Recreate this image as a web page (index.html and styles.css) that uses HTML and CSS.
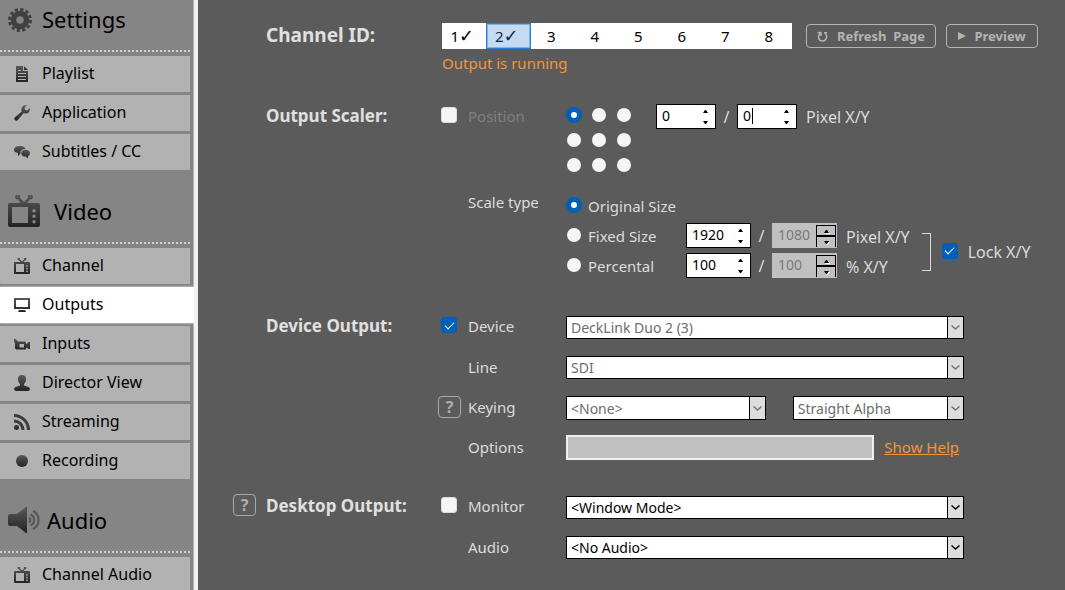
FILE: index.html
```
<!DOCTYPE html>
<html lang="en">
<head>
<meta charset="utf-8">
<title>Outputs</title>
<link rel="stylesheet" href="styles.css">
</head>
<body>
<svg class="defs" aria-hidden="true">
  <defs>
    <linearGradient id="ink" x1="0" y1="0" x2="0" y2="1"><stop offset="0" stop-color="#585858"/><stop offset="1" stop-color="#232323"/></linearGradient>
    <symbol id="tv" viewBox="0 0 32 32">
      <path fill="url(#ink)" fill-rule="evenodd" d="M2 8H12.500L10 4.500A2.600 2.600 0 1 1 12 3L16 7L20 3A2.600 2.600 0 1 1 22 4.500L19 8H30Q32 8 32 10V30Q32 32 30 32H2Q0 32 0 30V10Q0 8 2 8ZM4 12V28H20V12ZM26 14A1.700 1.700 0 1 0 26 17.400A1.700 1.700 0 1 0 26 14ZM26 19.500A1.700 1.700 0 1 0 26 22.900A1.700 1.700 0 1 0 26 19.500ZM26 25A1.700 1.700 0 1 0 26 28.400A1.700 1.700 0 1 0 26 25Z"/>
    </symbol>
    <symbol id="chev" viewBox="0 0 9 5"><path d="M.5.5L4.500 4L8.500.5" fill="none" stroke="currentColor" stroke-width="1.500"/></symbol>
    <symbol id="up" viewBox="0 0 5 3"><path d="M0 3L2 0H3L5 3Z" fill="currentColor"/></symbol>
    <symbol id="down" viewBox="0 0 5 3"><path d="M0 0L2 3H3L5 0Z" fill="currentColor"/></symbol>
  </defs>
</svg>
<div class="app">
  <nav class="side">
    <h2 class="group group-first"><svg class="gi gi-gear" viewBox="0 0 24 24"><circle cx="12" cy="12" r="6.500" fill="none" stroke="#404040" stroke-width="5.500"/><circle cx="12" cy="12" r="10.400" fill="none" stroke="#404040" stroke-width="3.200" stroke-dasharray="3.050 2.395"/></svg><span class="t-settings">Settings</span></h2>
    <ul class="items">
      <li><a class="item" href="#"><svg class="ic" viewBox="0 0 16 16"><path fill="url(#ink)" d="M2 0H9V5H14V16H2Z"/><path fill="url(#ink)" d="M10 0L14 4H10Z"/><path d="M4 4.500H7M4 7.500H12M4 10.500H12M4 13.500H12" stroke="#b2b2b2"/></svg><span>Playlist</span></a></li>
      <li><a class="item" href="#"><svg class="ic" viewBox="0 0 16 16"><path fill="url(#ink)" d="M13 .3L10.500 2.800L11 5L13.200 5.500L15.800 3C16.300 6 14.500 8.700 11.500 8.500L9.500 8.300L3.500 15.200C1.800 16.800-.8 14.400.8 12.500L7.700 6.500C6.500 3 9 -.6 13 .3Z"/></svg><span>Application</span></a></li>
      <li><a class="item" href="#"><svg class="ic" viewBox="0 0 16 16"><path fill="url(#ink)" d="M6 2C9 2 11 3.300 11.500 5C8 5 6 7 6.500 9.500L4 12V9C1.500 8.700 0 7.500 0 5.800C0 3.600 2.500 2 6 2Z"/><path fill="url(#ink)" d="M11.500 5.800C14 5.800 16 7.200 16 9.200C16 10.700 14.800 11.800 14 12V14.500L11.500 12.600C9 12.600 7.200 11.200 7.200 9.200C7.200 7.200 9 5.800 11.500 5.800Z"/></svg><span>Subtitles / CC</span></a></li>
    </ul>
    <h2 class="group"><svg class="gi gi-tv"><use href="#tv"/></svg><span class="t-video">Video</span></h2>
    <ul class="items">
      <li><a class="item" href="#"><svg class="ic"><use href="#tv"/></svg><span>Channel</span></a></li>
      <li><a class="item current" href="#" aria-current="page"><svg class="ic" viewBox="0 0 16 16"><path fill="url(#ink)" fill-rule="evenodd" d="M0 1H16V12H0ZM2 3V10H14V3ZM5 13H11L12 15H4Z"/></svg><span>Outputs</span></a></li>
      <li><a class="item" href="#"><svg class="ic" viewBox="0 0 16 16"><path fill="url(#ink)" fill-rule="evenodd" d="M0 3L1 2.500L4 5.500H11Q12 5.500 12 7.500L13 8L14.500 6H16V13H14.500L13 11.500L12 12V13.500H2.500L1 12.500V7L0 6ZM5.500 8V11.500H10V8Z"/></svg><span>Inputs</span></a></li>
      <li><a class="item" href="#"><svg class="ic" viewBox="0 0 16 16"><path fill="url(#ink)" d="M8 0C10.500 0 12 1.500 12 4C12 7 11 8 10 9V10.500L14.500 12Q16 12.800 16 14Q16 15.500 14 16H2Q0 15.500 0 14Q0 12.800 1.500 12L6 10.500V9C5 8 4 7 4 4C4 1.500 5.500 0 8 0Z"/></svg><span>Director View</span></a></li>
      <li><a class="item" href="#"><svg class="ic" viewBox="0 0 16 16"><g fill="none" stroke="#3c3c3c" stroke-width="3"><path d="M0 1.500A14.500 14.500 0 0 1 14.500 16M0 7A9 9 0 0 1 9 16"/></g><circle cx="2.500" cy="13.500" r="2.500" fill="#303030"/></svg><span>Streaming</span></a></li>
      <li><a class="item" href="#"><svg class="ic" viewBox="0 0 16 16"><circle cx="8" cy="8" r="6" fill="url(#ink)"/></svg><span>Recording</span></a></li>
    </ul>
    <h2 class="group"><svg class="gi gi-audio" viewBox="0 0 32 26"><path fill="url(#ink)" d="M2 7H9L18 0H19V26H18L9 19H2Q0 19 0 17V9Q0 7 2 7Z"/><g fill="none" stroke="#555" stroke-width="2"><path d="M21 10.500A3 3 0 0 1 21 15.500M22.500 7.500A6 6 0 0 1 22.500 18.500M25 4A10 10 0 0 1 25 22"/></g></svg><span class="t-audio">Audio</span></h2>
    <ul class="items">
      <li><a class="item" href="#"><svg class="ic"><use href="#tv"/></svg><span>Channel Audio</span></a></li>
    </ul>
  </nav>

  <main class="main">
    <section class="channels">
      <h3 class="title">Channel ID:</h3>
      <div class="picker">
        <div class="tabs" role="group" aria-label="Channel ID">
          <button class="tab">1<span class="tick">✓</span></button><button class="tab on" aria-pressed="true">2<span class="tick">✓</span></button><button class="tab">3</button><button class="tab">4</button><button class="tab">5</button><button class="tab">6</button><button class="tab">7</button><button class="tab">8</button>
        </div>
        <p class="status">Output is running</p>
      </div>
      <div class="actions">
        <button class="btn btn-refresh"><svg class="bi" viewBox="0 0 11 11"><path d="M.5 1.500H4V5M3.800 2C0 4.500 1 10 5.500 10C10 10 11 4.500 7.800 2M7.200 1.800H10" fill="none" stroke="currentColor" stroke-width="1.500"/></svg>Refresh&nbsp; Page</button>
        <button class="btn btn-preview"><svg class="bi bi-play" viewBox="0 0 8 8"><path d="M0 0L8 4L0 8Z" fill="currentColor"/></svg>Preview</button>
      </div>
    </section>

    <section class="form scaler">
      <h3 class="title">Output Scaler:</h3>
      <input class="check" type="checkbox" id="pos">
      <label class="name dim" for="pos">Position</label>
      <div class="position">
        <div class="anchors" role="radiogroup" aria-label="Anchor">
          <input type="radio" class="radio" name="a" aria-label="Top left" checked><input type="radio" class="radio" name="a" aria-label="Top"><input type="radio" class="radio" name="a" aria-label="Top right">
          <input type="radio" class="radio" name="a" aria-label="Left"><input type="radio" class="radio" name="a" aria-label="Center"><input type="radio" class="radio" name="a" aria-label="Right">
          <input type="radio" class="radio" name="a" aria-label="Bottom left"><input type="radio" class="radio" name="a" aria-label="Bottom"><input type="radio" class="radio" name="a" aria-label="Bottom right">
        </div>
        <div class="pair">
          <div class="num num-s"><input type="number" value="0" aria-label="Position X"><span class="spin"><svg><use href="#up"/></svg><svg><use href="#down"/></svg></span></div>
          <span class="slash">/</span>
          <div class="num num-s"><input type="number" value="0" aria-label="Position Y"><span class="caret"></span><span class="spin"><svg><use href="#up"/></svg><svg><use href="#down"/></svg></span></div>
          <span class="unit">Pixel X/Y</span>
        </div>
      </div>

      <span class="name name-scale">Scale type</span>
      <div class="scale">
        <div class="modes">
          <div class="mode"><input type="radio" class="radio" name="s" id="s1" checked><label for="s1">Original Size</label></div>
          <div class="mode"><input type="radio" class="radio" name="s" id="s2"><label class="ml" for="s2">Fixed Size</label>
            <div class="num"><input type="number" value="1920" aria-label="Width"><span class="spin"><svg><use href="#up"/></svg><svg><use href="#down"/></svg></span></div><span class="slash">/</span>
            <div class="num off"><input type="number" value="1080" aria-label="Height" disabled><span class="spin"><svg><use href="#up"/></svg><svg><use href="#down"/></svg></span></div><span class="unit">Pixel X/Y</span></div>
          <div class="mode"><input type="radio" class="radio" name="s" id="s3"><label class="ml" for="s3">Percental</label>
            <div class="num"><input type="number" value="100" aria-label="Percent X"><span class="spin"><svg><use href="#up"/></svg><svg><use href="#down"/></svg></span></div><span class="slash">/</span>
            <div class="num off"><input type="number" value="100" aria-label="Percent Y" disabled><span class="spin"><svg><use href="#up"/></svg><svg><use href="#down"/></svg></span></div><span class="unit">% X/Y</span></div>
        </div>
        <div class="lock"><span class="bracket"></span><input class="check" type="checkbox" id="lock" checked><label for="lock">Lock X/Y</label></div>
      </div>
    </section>

    <section class="form device">
      <h3 class="title">Device Output:</h3>
      <input class="check" type="checkbox" id="dev" checked>
      <label class="name" for="dev">Device</label>
      <div class="field"><div class="sel"><select aria-label="Device" disabled><option>DeckLink Duo 2 (3)</option></select><span class="drop"><svg><use href="#chev"/></svg></span></div></div>
      <label class="name" for="line">Line</label>
      <div class="field"><div class="sel"><select id="line" disabled><option>SDI</option></select><span class="drop"><svg><use href="#chev"/></svg></span></div></div>
      <button class="help help-key" aria-label="Keying help">?</button>
      <label class="name" for="key">Keying</label>
      <div class="field keying"><div class="sel sel-key"><select id="key" disabled><option>&lt;None&gt;</option></select><span class="drop"><svg><use href="#chev"/></svg></span></div><div class="sel sel-alpha"><select aria-label="Alpha" disabled><option>Straight Alpha</option></select><span class="drop"><svg><use href="#chev"/></svg></span></div></div>
      <label class="name" for="opt">Options</label>
      <div class="field options"><input class="text" id="opt" type="text" disabled><a class="link" href="#">Show Help</a></div>
    </section>

    <section class="form desktop">
      <button class="help" aria-label="Desktop output help">?</button>
      <h3 class="title">Desktop Output:</h3>
      <input class="check" type="checkbox" id="mon">
      <label class="name" for="mon">Monitor</label>
      <div class="field"><div class="sel"><select aria-label="Monitor"><option>&lt;Window Mode&gt;</option></select><span class="drop"><svg><use href="#chev"/></svg></span></div></div>
      <label class="name" for="aud">Audio</label>
      <div class="field"><div class="sel"><select id="aud"><option>&lt;No Audio&gt;</option></select><span class="drop"><svg><use href="#chev"/></svg></span></div></div>
    </section>
  </main>
</div>
</body>
</html>
```
FILE: styles.css
```
* { box-sizing: border-box; }
body { margin: 0; background: #5b5b5b; color: #dcdcdc; font: 15px/20px "Noto Sans", "Open Sans", sans-serif; }
h2, h3, p, ul { margin: 0; padding: 0; }
ul { list-style: none; }
button, input, select { font: inherit; margin: 0; }
.defs { position: absolute; width: 0; height: 0; }
.app { display: flex; height: 100vh; overflow: hidden; }

/* Sidebar */
.side { flex: 0 0 198px; background: #858585; border-right: 4px solid #f0f0f0; box-shadow: inset -1px 0 #b5b5b5; font-size: 16px; }
.group { display: flex; align-items: center; height: 74px; margin-right: 4px; padding: 9px 0 0 8px; border-bottom: 2px dotted #d0d0d0; color: #000; font-size: 22px; line-height: 28px; font-weight: 400; }
.group-first { height: 52px; padding: 0 0 10px 8px; }
.gi { flex: none; height: 32px; width: 32px; }
.gi-gear { width: 24px; height: 24px; }
.gi-audio { height: 26px; }
.t-settings { margin-left: 10px; padding-bottom: 2px; }
.t-video { margin-left: 14px; }
.t-audio { margin-left: 7px; }
.items { display: grid; gap: 3px; padding-top: 4px; }
.item { display: flex; align-items: center; gap: 12px; height: 36px; margin-right: 4px; padding-left: 14px; background: #b2b2b2; color: #000; text-decoration: none; }
.item span { padding-bottom: 2px; }
.item.current { margin-right: 0; background: #fff; box-shadow: 0 0 2px #fff; }
.ic { flex: none; width: 16px; height: 16px; }

/* Main */
.main { flex: 1; min-width: 0; }
.title { color: #e0e0e0; font-size: 17px; line-height: 24px; font-weight: 700; white-space: nowrap; }
.channels { display: flex; height: 95px; padding: 23px 27px 0 68px; }
.channels .title { flex: 0 0 176px; font-size: 19px; }
.picker { flex: 0 1 350px; }
.tabs { display: flex; height: 26px; background: #fff; }
.tab { flex: 1; min-width: 0; padding: 0 3px 0 0; border: 0; background: #fff; color: #000; font-size: 15px; line-height: 20px; white-space: nowrap; }
.tab.on { border: 1px solid #2a7fd4; background: #c5daf3; color: #102a4a; box-shadow: inset 0 0 0 1px #7fb2e6; }
.tick { font-family: "DejaVu Sans", sans-serif; font-size: 18px; }
.status { padding-top: 4px; color: #f0963c; }
.actions { display: flex; gap: 10px; padding-top: 1px; margin-left: 14px; }
.btn { display: flex; align-items: center; justify-content: center; height: 24px; padding: 0; border: 1px solid #b4b4b4; border-radius: 4px; background: transparent; color: #b4b4b4; font-size: 13px; font-weight: 700; white-space: nowrap; }
.btn-refresh { width: 130px; gap: 9px; }
.btn-preview { width: 92px; gap: 8px; }
.bi { width: 11px; height: 11px; }
.bi-play { width: 8px; height: 8px; }

.form { display: grid; grid-template-columns: 33px 175px 27px 98px minmax(0, 1fr); grid-auto-rows: 40px; align-items: center; padding: 0 35px; }
.form .title { grid-column: 2; padding-bottom: 2px; }
.form .check { grid-column: 3; margin-bottom: 4px; }
.name { grid-column: 4; }
.check + .name, .title + .check + .name { padding-bottom: 2px; }
.dim { color: #808080; }
.field { grid-column: 5; max-width: 398px; }

.check, .radio { appearance: none; width: 16px; height: 16px; background: #f5f5f5; }
.check { display: grid; place-items: center; border: 1px solid #ddd; border-radius: 3px; }
.check:checked { background: #005fb8; border-color: #005fb8; }
.check:checked::after { content: ""; width: 8px; height: 4px; border: solid #fff; border-width: 0 0 1px 1px; transform: translateY(-1px) rotate(-45deg); }
.radio { flex: none; border: 1px solid transparent; background-clip: padding-box; border-radius: 50%; }
.radio:checked { border: 5px solid #005fb8; background: #fff; }

.scaler { grid-template-rows: 83px 94px; align-items: start; }
.scaler > .title { padding-top: 9px; }
.scaler > .check { margin-top: 12px; }
.scaler > .dim { padding-top: 11px; }
.position { grid-column: 5; display: flex; gap: 24px; }
.anchors { display: grid; grid-template-columns: repeat(3, 16px); gap: 9px; padding-top: 12px; }
.pair { display: flex; align-items: center; height: 42px; }
.slash { width: 21px; padding-top: 2px; text-align: center; font-size: 16px; }
.unit { padding: 2px 0 0 9px; font-size: 16px; white-space: nowrap; }
.num { position: relative; display: flex; width: 65px; height: 25px; border: 1px solid #000; background: #fff; color: #000; }
.num-s { width: 60px; }
.num input { flex: 1; min-width: 0; width: 0; padding: 0 0 0 5px; border: 0; background: transparent; color: inherit; font-size: 14px; appearance: textfield; outline: 0; }
.num input::-webkit-inner-spin-button { display: none; }
.spin { display: flex; flex: 0 0 20px; flex-direction: column; justify-content: space-between; align-items: center; padding: 5px 0 4px; }
.spin svg { width: 5px; height: 3px; }
.caret { position: absolute; left: 14px; top: 3px; width: 1px; height: 16px; background: #000; }
.off { border-color: #c0c0c0; background: #c0c0c0; color: #7a7a7a; }
.off .spin { margin-top: 1px; border: 1px solid #000; border-bottom: 0; padding: 4px 0 3px; color: #000; background: linear-gradient(#000, #000) 0 50% / 100% 2px no-repeat; }
.off .spin svg { filter: drop-shadow(1px 1px 0 #fff); overflow: visible; }

.name-scale { padding-top: 14px; }
.scale { grid-column: 5; display: flex; padding-top: 12px; }
.mode { display: flex; align-items: center; height: 30px; }
.mode label { padding: 2px 0 0 6px; white-space: nowrap; }
.mode .ml { width: 104px; }
.mode .unit { padding-top: 4px; }
.lock { display: flex; align-items: center; margin-left: 12px; padding-top: 3px; white-space: nowrap; font-size: 16px; }
.bracket { width: 9px; height: 38px; margin: 30px 11px 0 0; border: 1px solid #dcdcdc; border-left: 0; }
.lock .check, .lock label { margin-top: 30px; }
.lock .check { margin-bottom: 2px; }
.lock label { margin-left: 10px; }

.device { padding-top: 35px; }
.sel { display: flex; position: relative; width: 100%; height: 23px; border: 1px solid #000; background: #fff; color: #000; }
.sel select { width: 100%; padding: 1px 20px 0 4px; border: 0; background: transparent; color: #000; appearance: none; font-size: 14px; opacity: 1; }
.sel select:disabled { color: #6d6d6d; }
.drop { position: absolute; top: 0; right: 0; bottom: 0; width: 16px; display: grid; place-items: center; border-left: 1px solid #000; background: #ddd; pointer-events: none; }
.drop svg { width: 9px; height: 5px; }
select:disabled + .drop { color: #777; }
.keying { display: flex; gap: 27px; padding-top: 2px; }
.keying .sel { height: 24px; }
.sel-key { flex: 200; }
.sel-alpha { flex: 171; }
.options { display: flex; align-items: center; gap: 10px; padding-right: 5px; }
.text { flex: 1; min-width: 0; height: 25px; border: 2px solid #f0f0f0; background: #c0c0c0; }
.link { color: #f0963c; font-size: 15px; }
.help { width: 23px; height: 22px; padding: 0; border: 1px solid #a8a8a8; border-radius: 4px; background: transparent; color: #b0b0b0; font-size: 16px; font-weight: 700; line-height: 18px; }
.help-key { grid-column: 3; margin-left: -3px; }
.desktop { padding-top: 20px; }
.desktop .help { margin-bottom: 4px; }
```
